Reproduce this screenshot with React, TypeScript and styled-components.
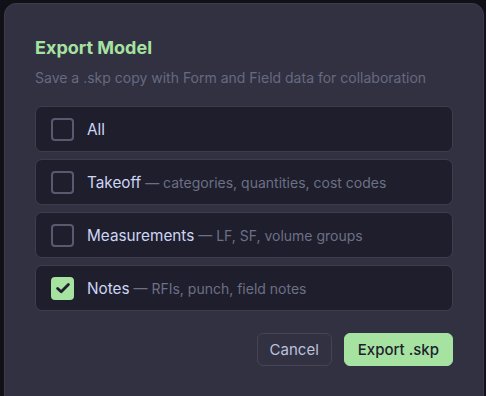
import React, { useState } from "react";
import styled, { createGlobalStyle } from "styled-components";

const GlobalStyle = createGlobalStyle`
	html, body {
		margin: 0;
		background: #111017;
		font-family: Inter, "Noto Sans", sans-serif;
	}
	* {
		box-sizing: border-box;
	}
`;

const options = [
	{ id: "all", label: "All", hint: "" },
	{ id: "takeoff", label: "Takeoff", hint: "categories, quantities, cost codes" },
	{ id: "measure", label: "Measurements", hint: "LF, SF, volume groups" },
	{ id: "notes", label: "Notes", hint: "RFIs, punch, field notes" },
];

function App() {
	const [checked, setChecked] = useState<Record<string, boolean>>({ notes: true });

	const toggle = (id: string) => setChecked((c) => ({ ...c, [id]: !c[id] }));

	return (
		<>
			<GlobalStyle />
			<Backdrop>
				<Dialog>
					<Title>Export Model</Title>
					<Subtitle>Save a .skp copy with Form and Field data for collaboration</Subtitle>
					<List>
						{options.map((o) => (
							<Row key={o.id} onClick={() => toggle(o.id)}>
								<Box $on={!!checked[o.id]}>
									{checked[o.id] && (
										<svg width="18" height="18" viewBox="0 0 18 18">
											<path
												d="M3.6 9.4 L7.2 12.8 L14.4 5.4"
												fill="none"
												stroke="#1e1e2e"
												strokeWidth="2.8"
												strokeLinecap="round"
												strokeLinejoin="round"
											/>
										</svg>
									)}
								</Box>
								<Label>
									{o.label}
									{o.hint && <Hint> — {o.hint}</Hint>}
								</Label>
							</Row>
						))}
					</List>
					<Actions>
						<Button>Cancel</Button>
						<Button $primary>Export .skp</Button>
					</Actions>
				</Dialog>
			</Backdrop>
		</>
	);
}

export default App;

const Backdrop = styled.div`
	height: 396px;
	padding: 3px 2px 0 4px;
	overflow: hidden;
`;

const Dialog = styled.div`
	background: #323142;
	border: 1px solid #3d3c4e;
	border-radius: 12px;
	padding: 32px 30px 40px;
	min-height: 420px;
`;

const Title = styled.h2`
	margin: 0;
	font-size: 18px;
	line-height: 24px;
	font-weight: 700;
	color: #a6e3a1;
`;

const Subtitle = styled.p`
	margin: 8px 0 0;
	font-size: 14px;
	line-height: 19px;
	color: #666a80;
`;

const List = styled.div`
	display: flex;
	flex-direction: column;
	gap: 7px;
	margin-top: 19px;
`;

const Row = styled.div`
	display: flex;
	align-items: center;
	gap: 13px;
	height: 46px;
	padding: 0 15px;
	background: #1f1e2c;
	border: 1px solid #3e3d50;
	border-radius: 7px;
	cursor: pointer;
`;

const Box = styled.span<{ $on: boolean }>`
	display: flex;
	align-items: center;
	justify-content: center;
	width: 23px;
	height: 23px;
	border-radius: 4px;
	border: 2px solid ${(p) => (p.$on ? "#a6e3a1" : "#585b70")};
	background: ${(p) => (p.$on ? "#a6e3a1" : "transparent")};
`;

const Label = styled.span`
	font-size: 15.3px;
	color: #cdd6f4;
`;

const Hint = styled.span`
	font-size: 14px;
	color: #6c7086;
`;

const Actions = styled.div`
	display: flex;
	justify-content: flex-end;
	gap: 12px;
	margin-top: 22px;
`;

const Button = styled.button<{ $primary?: boolean }>`
	height: 33px;
	padding: 0 ${(p) => (p.$primary ? 13 : 12)}px;
	border-radius: 6px;
	font-family: inherit;
	font-size: 15px;
	cursor: pointer;
	border: 1px solid ${(p) => (p.$primary ? "#a6e3a1" : "#454457")};
	background: ${(p) => (p.$primary ? "#a6e3a1" : "transparent")};
	color: ${(p) => (p.$primary ? "#1e1e2e" : "#bac2de")};
	font-weight: ${(p) => (p.$primary ? 500 : 400)};
`;
